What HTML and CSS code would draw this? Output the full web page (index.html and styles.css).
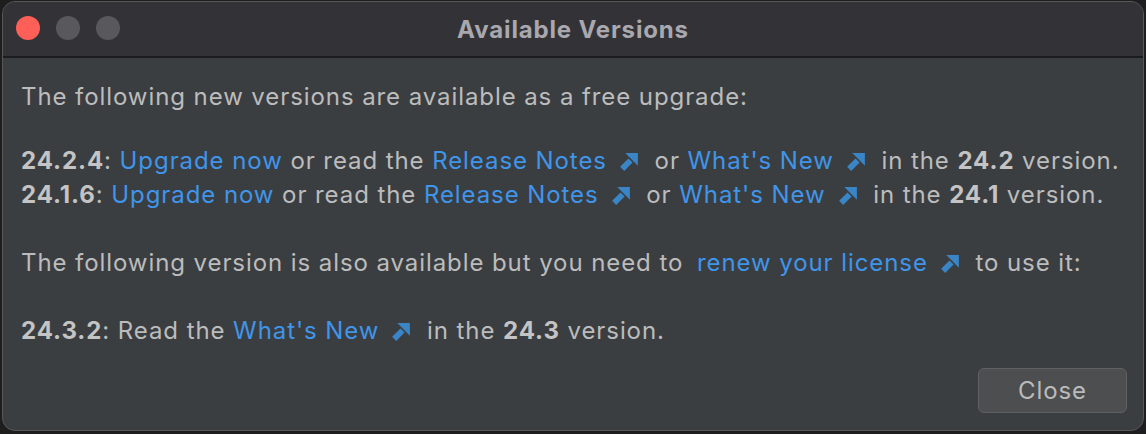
FILE: index.html
```html
<!DOCTYPE html>
<html>
<head>
<meta charset="utf-8">
<link rel="stylesheet" href="styles.css">
</head>
<body>
<div class="window">
  <div class="titlebar">
    <div class="lights">
      <span class="light red"></span>
      <span class="light grey"></span>
      <span class="light grey"></span>
    </div>
    <div class="title">Available Versions</div>
  </div>
  <div class="content">
    <p class="p-intro">The following new versions are available as a free upgrade:</p>
    <p class="p-list"><b>24.2.4</b>: <a class="link">Upgrade now</a> or read the <a class="link">Release Notes<svg class="arrow" viewBox="0 0 20 20"><path d="M3 17 L11 9" /><polygon points="6,2 18,2 18,14" /></svg></a> or <a class="link">What's New<svg class="arrow" viewBox="0 0 20 20"><path d="M3 17 L11 9" /><polygon points="6,2 18,2 18,14" /></svg></a> in the <b>24.2</b> version.<br><b>24.1.6</b>: <a class="link">Upgrade now</a> or read the <a class="link">Release Notes<svg class="arrow" viewBox="0 0 20 20"><path d="M3 17 L11 9" /><polygon points="6,2 18,2 18,14" /></svg></a> or <a class="link">What's New<svg class="arrow" viewBox="0 0 20 20"><path d="M3 17 L11 9" /><polygon points="6,2 18,2 18,14" /></svg></a> in the <b>24.1</b> version.</p>
    <p class="p-mid">The following version is also available but you need to <a class="link renew">renew your license<svg class="arrow" viewBox="0 0 20 20"><path d="M3 17 L11 9" /><polygon points="6,2 18,2 18,14" /></svg></a> to use it:</p>
    <p class="p-last"><b>24.3.2</b>: Read the <a class="link">What's New<svg class="arrow" viewBox="0 0 20 20"><path d="M3 17 L11 9" /><polygon points="6,2 18,2 18,14" /></svg></a> in the <b>24.3</b> version.</p>
    <div class="actions">
      <button class="btn">Close</button>
    </div>
  </div>
</div>
</body>
</html>
```
FILE: styles.css
```css
html, body {
  margin: 0;
  padding: 0;
}
body {
  background: #1e1e1f;
  width: 1146px;
  height: 434px;
  padding: 1px 2px 3px 2px;
  box-sizing: border-box;
  font-family: Inter, "Noto Sans", sans-serif;
}
.window {
  height: 100%;
  box-sizing: border-box;
  border: 1px solid #57575a;
  border-radius: 13px;
  overflow: hidden;
  background: #3b3e41;
  display: flex;
  flex-direction: column;
}
.titlebar {
  position: relative;
  height: 54px;
  flex: none;
  background: #333337;
  border-bottom: 2px solid #1c1c1e;
  display: flex;
  align-items: center;
  justify-content: center;
}
.lights {
  position: absolute;
  left: 13px;
  top: 14px;
  display: flex;
  gap: 16px;
}
.light {
  width: 24px;
  height: 24px;
  border-radius: 50%;
  display: block;
}
.red { background: #fe5f57; }
.grey { background: #59585d; }
.title {
  color: #a9a8ae;
  font-size: 24px;
  font-weight: 700;
  letter-spacing: 0.85px;
  margin-left: 0;
}
.content {
  flex: 1;
  padding: 22px 16px 0 18px;
  color: #bcbcbc;
  font-size: 24px;
  letter-spacing: 0.92px;
  line-height: 34px;
  display: flex;
  flex-direction: column;
}
.content p {
  margin: 0;
  white-space: nowrap;
}
.content b {
  font-weight: 700;
  color: #c4c4c4;
}
.p-intro { margin-bottom: 30px !important; }
.p-list { margin-bottom: 34px !important; }
.p-mid { margin-bottom: 34px !important; }
.link {
  color: #3f95ea;
}
.renew { margin-left: 6px; }
.arrow {
  width: 21px;
  height: 21px;
  margin-left: 12px;
  margin-right: 7px;
  vertical-align: -3px;
}
.arrow path {
  stroke: #3a85c6;
  stroke-width: 5.5;
  fill: none;
}
.arrow polygon {
  fill: #3a85c6;
}
.actions {
  display: flex;
  justify-content: flex-end;
  margin-top: 20px;
}
.btn {
  width: 149px;
  height: 45px;
  background: #4c4e50;
  border: 1px solid #5f6163;
  border-radius: 6px;
  color: #bbbbbb;
  font-family: Inter, "Noto Sans", sans-serif;
  font-size: 24px;
  letter-spacing: 0.9px;
  padding: 0;
}
```
